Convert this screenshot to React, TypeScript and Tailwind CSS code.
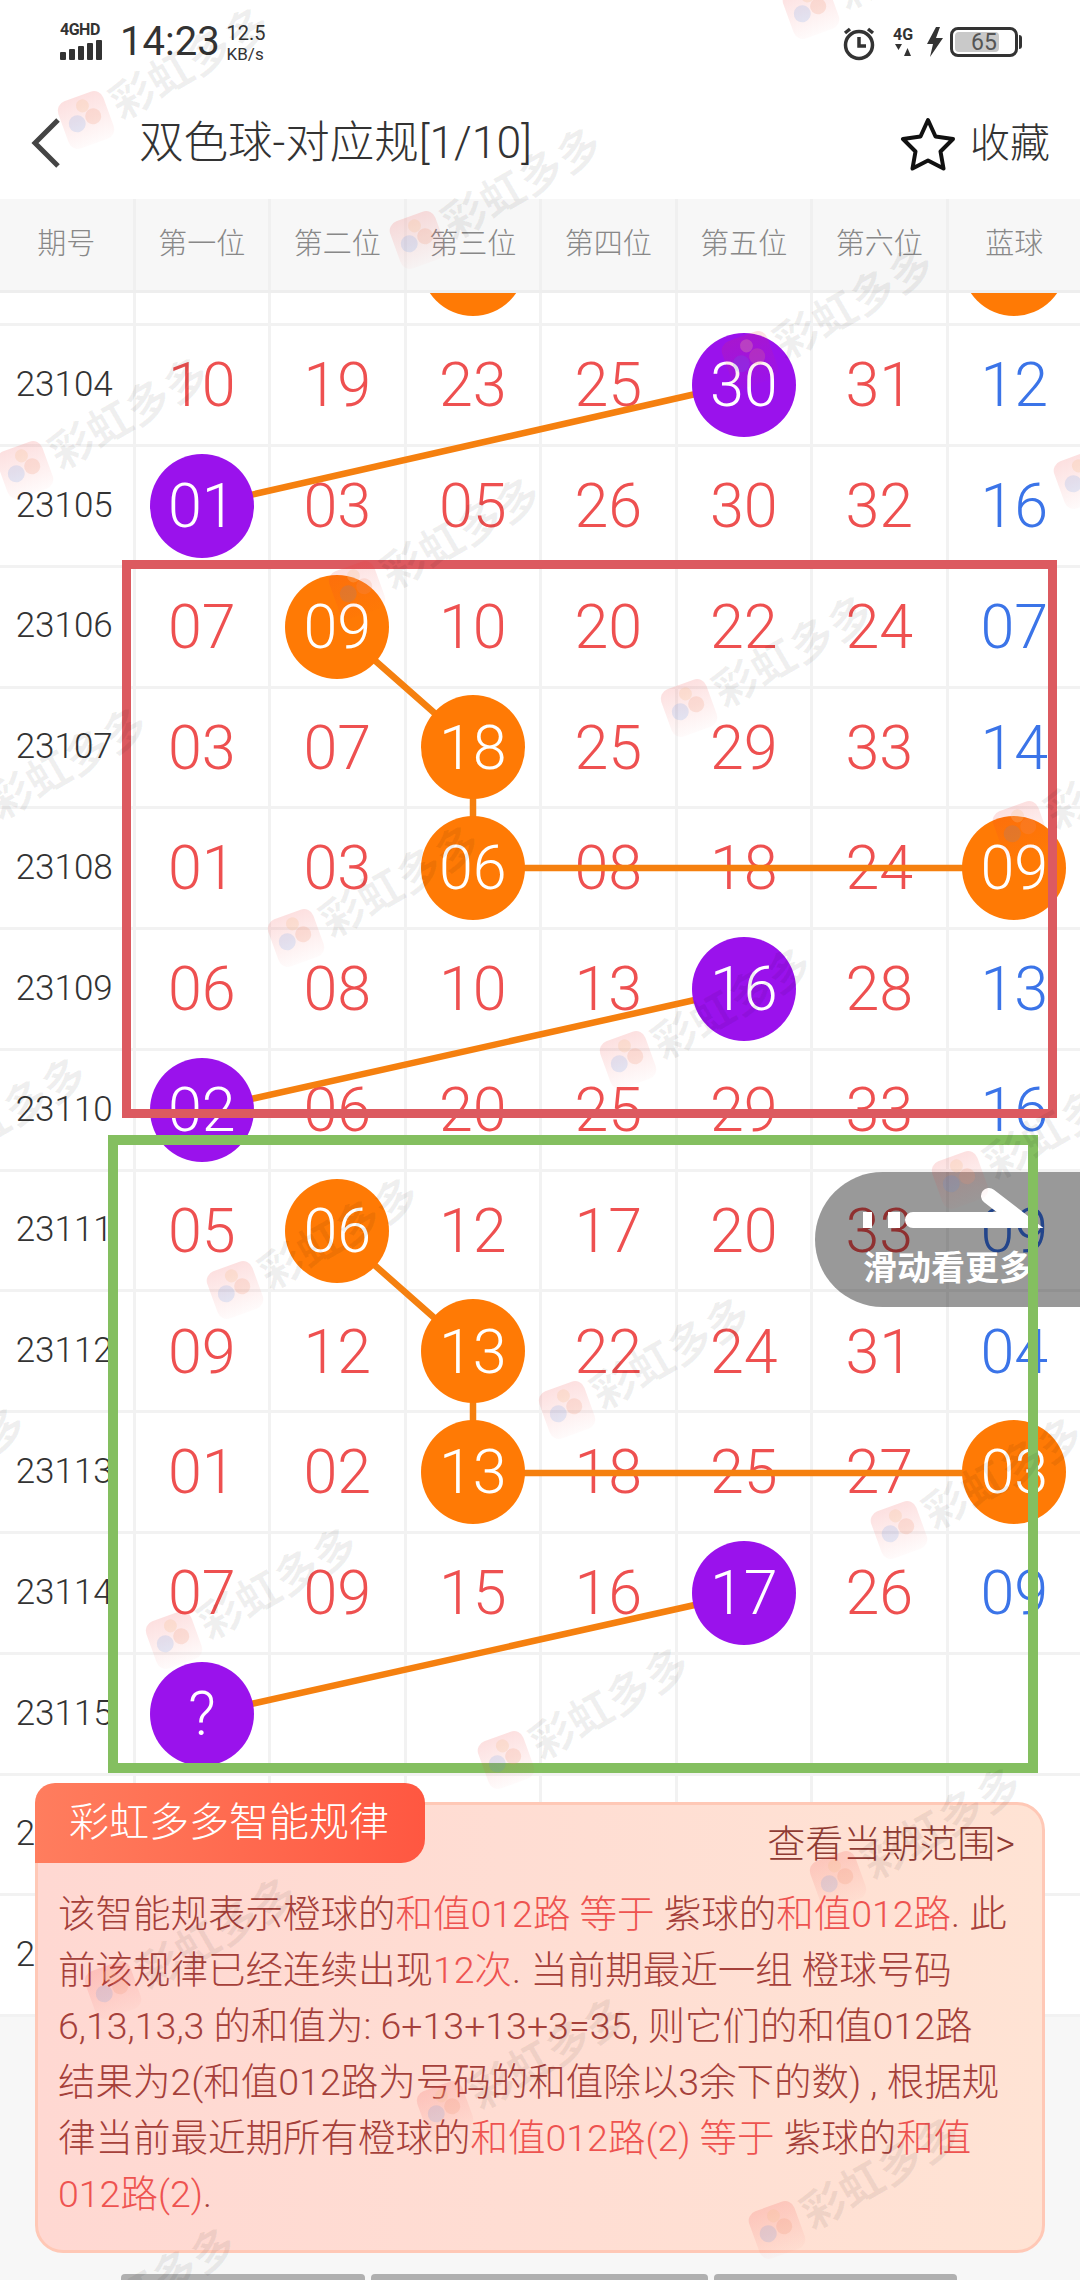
const FONT = "font-[Roboto,'Noto_Sans_CJK_SC',sans-serif]";

type Ball = { n: string; c: "o" | "p" };
type Cell = string | Ball;

const o = (n: string): Ball => ({ n, c: "o" });
const p = (n: string): Ball => ({ n, c: "p" });

const rows: { id: string; cells: Cell[] }[] = [
  { id: "23103", cells: ["", "", o(""), "", "", "", o("")] },
  { id: "23104", cells: ["10", "19", "23", "25", p("30"), "31", "12"] },
  { id: "23105", cells: [p("01"), "03", "05", "26", "30", "32", "16"] },
  { id: "23106", cells: ["07", o("09"), "10", "20", "22", "24", "07"] },
  { id: "23107", cells: ["03", "07", o("18"), "25", "29", "33", "14"] },
  { id: "23108", cells: ["01", "03", o("06"), "08", "18", "24", o("09")] },
  { id: "23109", cells: ["06", "08", "10", "13", p("16"), "28", "13"] },
  { id: "23110", cells: [p("02"), "06", "20", "25", "29", "33", "16"] },
  { id: "23111", cells: ["05", o("06"), "12", "17", "20", "33", "09"] },
  { id: "23112", cells: ["09", "12", o("13"), "22", "24", "31", "04"] },
  { id: "23113", cells: ["01", "02", o("13"), "18", "25", "27", o("03")] },
  { id: "23114", cells: ["07", "09", "15", "16", p("17"), "26", "09"] },
  { id: "23115", cells: [p("?"), "", "", "", "", "", ""] },
  { id: "23116", cells: ["", "", "", "", "", "", ""] },
  { id: "23117", cells: ["", "", "", "", "", "", ""] },
];

const heads = ["期号", "第一位", "第二位", "第三位", "第四位", "第五位", "第六位", "蓝球"];

// logo centres of the repeating watermark
const marks = [
  [86, 120], [25, 470], [-36, 820], [-97, 1170], [-158, 1520],
  [52, 2340], [113, 1990], [174, 1640], [235, 1290], [296, 938], [357, 590], [418, 240],
  [445, 2110], [506, 1760], [567, 1410], [628, 1060], [689, 708], [750, 360], [811, 10],
  [777, 2230], [838, 1880], [899, 1530], [960, 1180], [1021, 830], [1082, 480],
];

function Watermark({ x, y }: { x: number; y: number }) {
  return (
    <div className="absolute" style={{ left: x, top: y }}>
      <div className="absolute -left-[24px] -top-[25px] h-[50px] w-[48px] -rotate-[20deg] rounded-[10px] bg-gradient-to-b from-[#f03030]/15 to-[#f03030]/[0.02]">
        <span className="absolute left-[6px] top-[17px] h-[17px] w-[17px] rounded-full bg-[#4a90e8]/15" />
        <span className="absolute left-[24px] top-[16px] h-[16px] w-[16px] rounded-full bg-[#f09070]/20" />
        <span className="absolute left-[19px] top-[4px] h-[13px] w-[13px] rounded-full bg-[#f8c090]/25" />
      </div>
      <span className="absolute left-[28px] -top-[37px] origin-left -rotate-[30deg] whitespace-nowrap text-[44px] font-bold leading-[50px] text-black/[0.06]">
        彩虹多多
      </span>
    </div>
  );
}

function NumberCell({ cell, blue }: { cell: Cell; blue: boolean }) {
  const inner =
    typeof cell === "string" ? (
      <span className={"pt-[2px] " + (blue ? "text-[#3b74e8]" : "text-[#ee5050]")}>{cell}</span>
    ) : (
      <span
        className={
          "relative z-20 flex h-[104px] w-[104px] items-center justify-center rounded-full pt-[2px] text-white " +
          (cell.c === "o" ? "bg-[#ff7a05]" : "bg-[#9a12ec]")
        }
      >
        {cell.n}
      </span>
    );
  return (
    <div className="flex items-center justify-center border-r-[3px] border-[#f2f2f2] text-[61px] font-light last:border-r-0">
      {inner}
    </div>
  );
}

function StatusBar() {
  return (
    <div className="flex h-[86px] items-start justify-between pl-[60px] pr-[58px] pt-[22px] text-[#333]">
      <div className="flex items-start">
        <div className="flex w-[46px] flex-col">
          <span className="text-[16px] font-bold leading-[16px] tracking-[-0.5px]">4GHD</span>
          <div className="mt-[2px] flex h-[20px] items-end gap-[3px]">
            <span className="h-[8px] w-[6px] rounded-[1px] bg-[#333]" />
            <span className="h-[11px] w-[6px] rounded-[1px] bg-[#333]" />
            <span className="h-[14px] w-[6px] rounded-[1px] bg-[#333]" />
            <span className="h-[17px] w-[6px] rounded-[1px] bg-[#333]" />
            <span className="h-[20px] w-[6px] rounded-[1px] bg-[#333]" />
          </div>
        </div>
        <span className="ml-[14px] mt-[-2px] text-[40px] leading-[44px]">14:23</span>
        <div className="ml-[7px] flex flex-col">
          <span className="text-[20px] leading-[22px]">12.5</span>
          <span className="text-[17px] leading-[20px]">KB/s</span>
        </div>
      </div>
      <div className="flex items-start pt-[5px]">
        <svg width="34" height="34" viewBox="0 0 34 34" fill="none" stroke="#333" strokeWidth="3.5">
          <circle cx="17" cy="18" r="13.5" />
          <path d="M17 10v9h7M3 6l5-4M31 6l-5-4" />
        </svg>
        <div className="ml-[14px] flex w-[26px] flex-col items-center">
          <span className="text-[16px] font-bold leading-[16px]">4G</span>
          <svg width="18" height="14" viewBox="0 0 18 14" fill="#333" className="mt-[1px]">
            <path d="M1 0h7L4.500 6zM13.500 4L17 12h-7z" />
          </svg>
        </div>
        <svg width="18" height="30" viewBox="0 0 18 30" fill="#333" className="ml-[10px]">
          <path d="M10 0L1 17h6L4 30l13-19h-7l4-11z" />
        </svg>
        <div className="relative ml-[6px] h-[30px] w-[68px] rounded-[8px] border-[3px] border-[#333] p-[2px]">
          <div className="h-full w-[44px] rounded-[4px] bg-[#c9c9c9]" />
          <span className="absolute inset-0 flex items-center justify-center text-[23px] leading-none text-[#555]">65</span>
        </div>
        <span className="ml-[1px] mt-[8px] h-[14px] w-[3px] rounded-r bg-[#333]" />
      </div>
    </div>
  );
}

function TitleBar() {
  return (
    <div className="flex h-[113px] items-start justify-between pr-[30px] pt-[31px] text-[#333]">
      <div className="flex items-center">
        <svg width="32" height="52" viewBox="0 0 32 52" fill="none" stroke="#444" strokeWidth="5" className="ml-[30px]">
          <path d="M28 3L5 26l23 23" />
        </svg>
        <span className="ml-[77px] text-[44.500px] font-light leading-[52px]">双色球-对应规[1/10]</span>
      </div>
      <div className="flex items-center">
        <svg width="56" height="54" viewBox="0 0 56 54" fill="none" stroke="#111" strokeWidth="4" strokeLinejoin="round">
          <path d="M28 3l7.500 16.500 17.500 2.500-12.500 12.500 3 17-15.500-8-15.500 8 3-17L3 22l17.500-2.500z" />
        </svg>
        <span className="ml-[14px] text-[40px] font-light leading-[52px]">收藏</span>
      </div>
    </div>
  );
}

function HeadRow() {
  return (
    <div className="relative z-[5] grid h-[94px] grid-cols-[135.5px_repeat(6,135.5px)_1fr] border-b-[3px] border-[#eeeeee] bg-[#f7f7f7]">
      {heads.map((h) => (
        <div
          key={h}
          className="flex items-center justify-center border-r-[3px] border-[#f0f0f0] text-[29px] font-light text-[#888] last:border-r-0"
        >
          {h}
        </div>
      ))}
    </div>
  );
}

function Links() {
  return (
    <svg width="1080" height="2280" className="absolute left-0 top-0 z-10" fill="none" stroke="#f5800f" strokeWidth="6.500">
      <path d="M744 383L202 506" />
      <path d="M337 627L473 747V868H1014" />
      <path d="M744 989L202 1110" />
      <path d="M337 1232L473 1352V1473H1014" />
      <path d="M744 1594L202 1715" />
    </svg>
  );
}

function SwipeHint() {
  return (
    <div className="absolute left-[815px] top-[1172px] z-[25] h-[135px] w-[265px] rounded-l-[68px] bg-black/40">
      <svg width="265" height="135" viewBox="0 0 265 135" fill="none" stroke="#fff" strokeWidth="16" className="absolute left-0 top-0">
        <path d="M48 48h9M73 48h12" />
        <path d="M98 48H205L174 24" strokeLinecap="round" />
      </svg>
      <span className="absolute left-[48px] top-[74px] whitespace-nowrap text-[34px] font-bold leading-[44px] text-white">
        滑动看更多
      </span>
    </div>
  );
}

const hl = "text-[#ee5350]";

function RuleCard() {
  return (
    <div className="absolute left-[35px] top-[1783px] z-40 h-[470px] w-[1010px]">
      <div className="absolute inset-x-0 bottom-0 top-[19px] rounded-[28px] border-[3px] border-[#ffc8b6] bg-gradient-to-r from-[#ffd8d2] to-[#ffe3d4]" />
      <div className="absolute left-0 top-0 flex h-[80px] w-[390px] items-center rounded-t-[20px] rounded-br-[24px] bg-gradient-to-r from-[#ff7d5e] to-[#ff5741] pl-[34px] text-[40px] font-light text-white">
        彩虹多多智能规律
      </div>
      <div className="absolute right-[30px] top-[36px] text-[38px] font-light leading-[50px] text-[#8f3b33]">
        查看当期范围&gt;
      </div>
      <div className="absolute left-[23px] top-[103px] whitespace-nowrap text-[37.500px] font-light leading-[56px] text-[#a5403a]">
        <div>
          该智能规表示橙球的<span className={hl}>和值012路 等于</span> 紫球的<span className={hl}>和值012路</span>. 此
        </div>
        <div>
          前该规律已经连续出现<span className={hl}>12次</span>. 当前期最近一组 橙球号码
        </div>
        <div>6,13,13,3 的和值为: 6+13+13+3=35, 则它们的和值012路</div>
        <div>结果为2(和值012路为号码的和值除以3余下的数) , 根据规</div>
        <div>
          律当前最近期所有橙球的<span className={hl}>和值012路(2) 等于</span> 紫球的<span className={hl}>和值</span>
        </div>
        <div>
          <span className={hl}>012路(2)</span>.
        </div>
      </div>
    </div>
  );
}

export default function App() {
  return (
    <div className={"relative h-[2280px] w-[1080px] overflow-hidden bg-white " + FONT}>
      <StatusBar />
      <TitleBar />
      <HeadRow />
      <div className="h-[1724px] overflow-hidden">
        <div className="-mt-[87.700px]">
          {rows.map((r) => (
            <div
              key={r.id}
              className="grid h-[120.800px] grid-cols-[135.500px_repeat(6,135.500px)_1fr] border-b-[3px] border-[#f2f2f2]"
            >
              <div className="flex items-center justify-center border-r-[3px] border-[#f2f2f2] pr-[4px] text-[35px] font-light text-[#333]">
                {r.id}
              </div>
              {r.cells.map((c, i) => (
                <NumberCell key={i} cell={c} blue={i === 6} />
              ))}
            </div>
          ))}
        </div>
      </div>
      <div className="h-[263px] bg-[#f7f7f7]" />

      <Links />
      <SwipeHint />
      <div className="absolute left-[122px] top-[560px] z-30 h-[558px] w-[935px] border-[9px] border-[#dc5a60]" />
      <div className="absolute left-[108px] top-[1135px] z-30 h-[638px] w-[930px] border-[10px] border-[#84bf60]" />
      <RuleCard />

      <div className="absolute bottom-0 left-[121px] z-40 flex h-[6px] gap-[6px]">
        <span className="w-[244px] rounded-t-[4px] bg-[#b0b0b0]" />
        <span className="w-[337px] rounded-t-[4px] bg-[#b0b0b0]" />
        <span className="w-[243px] rounded-t-[4px] bg-[#b0b0b0]" />
      </div>

      <div className="pointer-events-none absolute inset-0 z-50">
        {marks.map(([x, y]) => (
          <Watermark key={`${x}-${y}`} x={x} y={y} />
        ))}
      </div>
    </div>
  );
}
